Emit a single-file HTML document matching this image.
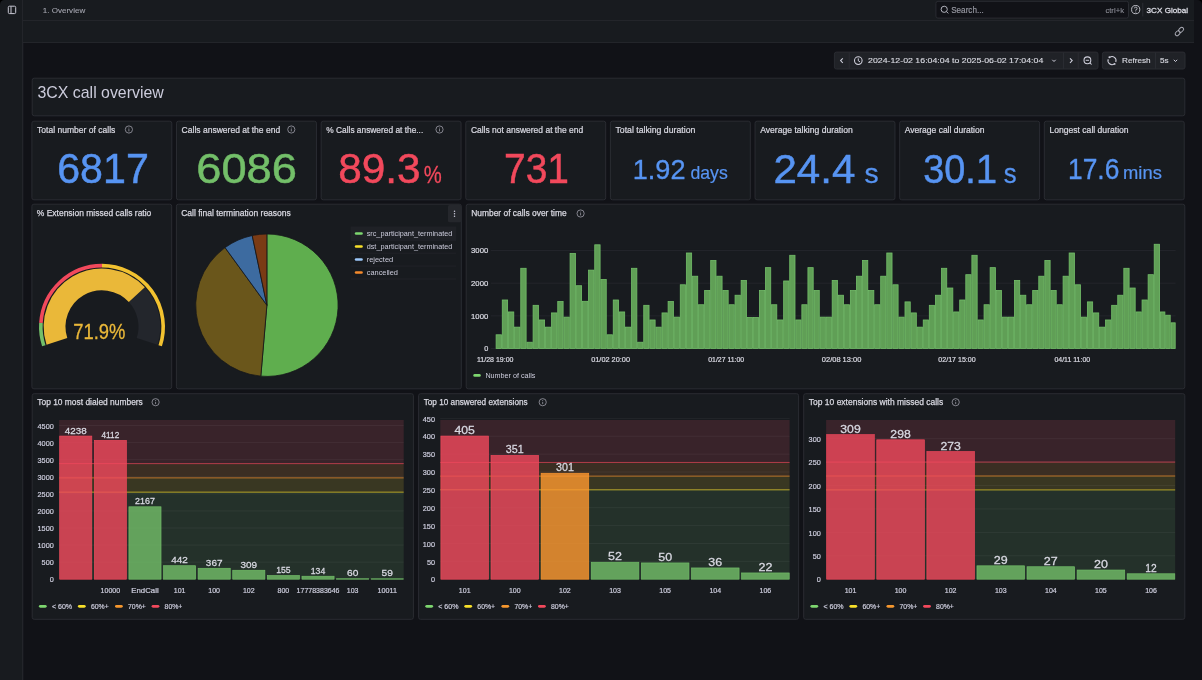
<!DOCTYPE html>
<html><head><meta charset="utf-8"><title>3CX call overview</title>
<style>html,body{margin:0;padding:0;background:#111217;width:1202px;height:680px;overflow:hidden}
svg{display:block;font-family:"Liberation Sans", sans-serif;will-change:transform}</style></head>
<body><svg width="1202" height="680" viewBox="0 0 1202 680">
<rect x="0" y="0" width="1202" height="680" fill="#111217"/>
<rect x="0" y="0" width="23" height="680" fill="#181b1f"/>
<line x1="22.7" y1="0" x2="22.7" y2="680" stroke="#25272c" stroke-width="1.2"/>
<rect x="23" y="0" width="1171" height="43" fill="#181b1f"/>
<line x1="23" y1="20.5" x2="1194" y2="20.5" stroke="#23252a" stroke-width="1"/>
<line x1="23" y1="42.5" x2="1194" y2="42.5" stroke="#23252a" stroke-width="1"/>
<rect x="8.3" y="6.2" width="7.4" height="7.4" rx="1.2" fill="none" stroke="#c9c9d4" stroke-width="1"/>
<line x1="11" y1="6.5" x2="11" y2="13.3" stroke="#c9c9d4" stroke-width="1"/>
<path d="M0,0 H4.5 A4.5,4.5 0 0 0 0,4.5 Z" fill="#000"/>
<path d="M1202,0 H1197.5 A4.5,4.5 0 0 1 1202,4.5 Z" fill="#000"/>
<text x="42.8" y="12.5" font-size="7.9" fill="#a3a4ae" text-anchor="start" font-weight="400" stroke="#a3a4ae" stroke-width="0.1" textLength="42.4" lengthAdjust="spacingAndGlyphs">1. Overview</text>
<rect x="935.9" y="1.3" width="192.6" height="16.8" fill="#111217" stroke="#2a2c32" stroke-width="1" rx="2"/>
<circle cx="944.2" cy="9.3" r="3.1" fill="none" stroke="#b0b1bb" stroke-width="1"/><line x1="946.5" y1="11.6" x2="948.3" y2="13.4" stroke="#b0b1bb" stroke-width="1"/>
<text x="951.2" y="12.9" font-size="8.3" fill="#9a9ba5" text-anchor="start" font-weight="400" stroke="#9a9ba5" stroke-width="0.15" textLength="32.5" lengthAdjust="spacingAndGlyphs">Search...</text>
<text x="1124" y="12.6" font-size="6.9" fill="#8b8c96" text-anchor="end" font-weight="400" stroke="#8b8c96" stroke-width="0.1" textLength="18.6" lengthAdjust="spacingAndGlyphs">ctrl+k</text>
<circle cx="1135.7" cy="9.6" r="4.1" fill="none" stroke="#c4c5ce" stroke-width="0.95"/>
<path d="M1134.4,8.4 A1.35,1.35 0 1 1 1135.8,9.8 L1135.8,10.7" fill="none" stroke="#c4c5ce" stroke-width="0.85"/><circle cx="1135.8" cy="12" r="0.5" fill="#c4c5ce"/>
<line x1="1142.8" y1="2.8" x2="1142.8" y2="16.4" stroke="#2c2e34" stroke-width="1"/>
<text x="1146.6" y="12.7" font-size="8.0" fill="#d8d9e1" text-anchor="start" font-weight="400" stroke="#d8d9e1" stroke-width="0.3" textLength="41.5" lengthAdjust="spacingAndGlyphs">3CX Global</text>
<g transform="translate(1179.4,31.5) rotate(-45)" fill="none" stroke="#aeafb9" stroke-width="0.95"><rect x="-5.2" y="-1.9" width="5.6" height="3.8" rx="1.9"/><rect x="-0.4" y="-1.9" width="5.6" height="3.8" rx="1.9"/></g>
<rect x="834.4" y="52.1" width="263.6" height="16.9" fill="#202227" stroke="#2a2c32" stroke-width="1" rx="2"/>
<line x1="849.2" y1="52.4" x2="849.2" y2="68.8" stroke="#2a2c32" stroke-width="1"/>
<line x1="1063.5" y1="52.4" x2="1063.5" y2="68.8" stroke="#2a2c32" stroke-width="1"/>
<line x1="1078.2" y1="52.4" x2="1078.2" y2="68.8" stroke="#2a2c32" stroke-width="1"/>
<polyline points="842.8,58.4 840.6,60.6 842.8,62.8" fill="none" stroke="#d0d0dc" stroke-width="1.05"/>
<circle cx="858.3" cy="60.6" r="3.8" fill="none" stroke="#d0d0dc" stroke-width="1.05"/><polyline points="858.3,58.4 858.3,60.8 860,61.9" fill="none" stroke="#d0d0dc" stroke-width="1"/>
<text x="868" y="63.1" font-size="8.0" fill="#d8d9e1" text-anchor="start" font-weight="400" stroke="#d8d9e1" stroke-width="0.15" textLength="175.3" lengthAdjust="spacingAndGlyphs">2024-12-02 16:04:04 to 2025-06-02 17:04:04</text>
<polyline points="1052.3,59.8 1054,61.5 1055.7,59.8" fill="none" stroke="#d0d0dc" stroke-width="1"/>
<polyline points="1070,58.4 1072.2,60.6 1070,62.8" fill="none" stroke="#d0d0dc" stroke-width="1.05"/>
<circle cx="1087.4" cy="60.3" r="3.4" fill="none" stroke="#d0d0dc" stroke-width="1.05"/><line x1="1085.7" y1="60.3" x2="1089.1" y2="60.3" stroke="#d0d0dc" stroke-width="0.95"/><line x1="1089.9" y1="62.8" x2="1091.6" y2="64.5" stroke="#d0d0dc" stroke-width="1.05"/>
<rect x="1102.4" y="52.1" width="82.6" height="16.9" fill="#202227" stroke="#2a2c32" stroke-width="1" rx="2"/>
<line x1="1155.5" y1="52.4" x2="1155.5" y2="68.8" stroke="#2a2c32" stroke-width="1"/>
<path d="M1109.71,57.32 A4.0,4.0 0 0 1 1115.76,61.97 M1114.29,63.88 A4.0,4.0 0 0 1 1108.24,59.23" fill="none" stroke="#d0d0dc" stroke-width="1.05"/><circle cx="1109.41" cy="57.32" r="0.95" fill="#d0d0dc"/><circle cx="1114.59" cy="63.88" r="0.95" fill="#d0d0dc"/>
<text x="1122" y="63.1" font-size="8.0" fill="#d8d9e1" text-anchor="start" font-weight="400" stroke="#d8d9e1" stroke-width="0.15" textLength="28.6" lengthAdjust="spacingAndGlyphs">Refresh</text>
<text x="1160" y="63.1" font-size="8.0" fill="#d8d9e1" text-anchor="start" font-weight="400" stroke="#d8d9e1" stroke-width="0.15" textLength="8.6" lengthAdjust="spacingAndGlyphs">5s</text>
<polyline points="1173.8,59.8 1175.5,61.5 1177.2,59.8" fill="none" stroke="#d0d0dc" stroke-width="1"/>
<rect x="32.2" y="78.2" width="1152.6" height="37.6" fill="#181b1f" stroke="#2a2c32" stroke-width="1" rx="2"/>
<text x="37.5" y="97.5" font-size="15.9" fill="#ccccdc" text-anchor="start" font-weight="400">3CX call overview</text>
<rect x="31.9" y="121.2" width="139.9" height="78.6" fill="#181b1f" stroke="#2a2c32" stroke-width="1" rx="2"/>
<text x="37.0" y="132.7" font-size="8.5" fill="#d9d9e2" text-anchor="start" font-weight="400" stroke="#d9d9e2" stroke-width="0.22" textLength="78.3" lengthAdjust="spacingAndGlyphs">Total number of calls</text>
<rect x="176.52999999999997" y="121.2" width="139.9" height="78.6" fill="#181b1f" stroke="#2a2c32" stroke-width="1" rx="2"/>
<text x="181.63" y="132.7" font-size="8.5" fill="#d9d9e2" text-anchor="start" font-weight="400" stroke="#d9d9e2" stroke-width="0.22" textLength="98.5" lengthAdjust="spacingAndGlyphs">Calls answered at the end</text>
<rect x="321.15999999999997" y="121.2" width="139.9" height="78.6" fill="#181b1f" stroke="#2a2c32" stroke-width="1" rx="2"/>
<text x="326.26" y="132.7" font-size="8.5" fill="#d9d9e2" text-anchor="start" font-weight="400" stroke="#d9d9e2" stroke-width="0.22" textLength="97" lengthAdjust="spacingAndGlyphs">% Calls answered at the...</text>
<rect x="465.78999999999996" y="121.2" width="139.9" height="78.6" fill="#181b1f" stroke="#2a2c32" stroke-width="1" rx="2"/>
<text x="470.89" y="132.7" font-size="8.5" fill="#d9d9e2" text-anchor="start" font-weight="400" stroke="#d9d9e2" stroke-width="0.22" textLength="112.3" lengthAdjust="spacingAndGlyphs">Calls not answered at the end</text>
<rect x="610.4200000000001" y="121.2" width="139.89999999999995" height="78.6" fill="#181b1f" stroke="#2a2c32" stroke-width="1" rx="2"/>
<text x="615.52" y="132.7" font-size="8.5" fill="#d9d9e2" text-anchor="start" font-weight="400" stroke="#d9d9e2" stroke-width="0.22" textLength="79.8" lengthAdjust="spacingAndGlyphs">Total talking duration</text>
<rect x="755.0500000000001" y="121.2" width="139.90000000000006" height="78.6" fill="#181b1f" stroke="#2a2c32" stroke-width="1" rx="2"/>
<text x="760.15" y="132.7" font-size="8.5" fill="#d9d9e2" text-anchor="start" font-weight="400" stroke="#d9d9e2" stroke-width="0.22" textLength="92.6" lengthAdjust="spacingAndGlyphs">Average talking duration</text>
<rect x="899.6800000000001" y="121.2" width="139.89999999999995" height="78.6" fill="#181b1f" stroke="#2a2c32" stroke-width="1" rx="2"/>
<text x="904.78" y="132.7" font-size="8.5" fill="#d9d9e2" text-anchor="start" font-weight="400" stroke="#d9d9e2" stroke-width="0.22" textLength="79.7" lengthAdjust="spacingAndGlyphs">Average call duration</text>
<rect x="1044.31" y="121.2" width="139.89999999999995" height="78.6" fill="#181b1f" stroke="#2a2c32" stroke-width="1" rx="2"/>
<text x="1049.4099999999999" y="132.7" font-size="8.5" fill="#d9d9e2" text-anchor="start" font-weight="400" stroke="#d9d9e2" stroke-width="0.22" textLength="79.2" lengthAdjust="spacingAndGlyphs">Longest call duration</text>
<text x="57.20" y="183.2" font-size="42.9" fill="#5794F2" textLength="91.60" lengthAdjust="spacingAndGlyphs" stroke="#5794F2" stroke-width="0.51">6817</text>
<text x="196.20" y="183.2" font-size="42.9" fill="#73BF69" textLength="100.80" lengthAdjust="spacingAndGlyphs" stroke="#73BF69" stroke-width="0.51">6086</text>
<text x="338.20" y="183.2" font-size="42.9" fill="#F2495C" textLength="82.40" lengthAdjust="spacingAndGlyphs" stroke="#F2495C" stroke-width="0.51">89.3</text>
<text x="423.66" y="183.2" font-size="24" fill="#F2495C" textLength="17.98" lengthAdjust="spacingAndGlyphs" stroke="#F2495C" stroke-width="0.29">%</text>
<text x="504.10" y="183.2" font-size="42.9" fill="#F2495C" textLength="64.90" lengthAdjust="spacingAndGlyphs" stroke="#F2495C" stroke-width="0.51">731</text>
<text x="632.70" y="178.6" font-size="28.5" fill="#5794F2" textLength="52.79" lengthAdjust="spacingAndGlyphs" stroke="#5794F2" stroke-width="0.34">1.92</text>
<text x="690.38" y="178.6" font-size="17.8" fill="#5794F2" textLength="37.35" lengthAdjust="spacingAndGlyphs" stroke="#5794F2" stroke-width="0.21">days</text>
<text x="773.47" y="182.7" font-size="40.8" fill="#5794F2" textLength="81.86" lengthAdjust="spacingAndGlyphs" stroke="#5794F2" stroke-width="0.49">24.4</text>
<text x="864.50" y="182.7" font-size="28.5" fill="#5794F2" textLength="14.10" lengthAdjust="spacingAndGlyphs" stroke="#5794F2" stroke-width="0.34">s</text>
<text x="923.27" y="182.7" font-size="40.8" fill="#5794F2" textLength="73.66" lengthAdjust="spacingAndGlyphs" stroke="#5794F2" stroke-width="0.49">30.1</text>
<text x="1003.80" y="182.7" font-size="28.5" fill="#5794F2" textLength="12.80" lengthAdjust="spacingAndGlyphs" stroke="#5794F2" stroke-width="0.34">s</text>
<text x="1067.98" y="178.5" font-size="29.2" fill="#5794F2" textLength="51.34" lengthAdjust="spacingAndGlyphs" stroke="#5794F2" stroke-width="0.35">17.6</text>
<text x="1123.04" y="178.5" font-size="18.8" fill="#5794F2" textLength="38.82" lengthAdjust="spacingAndGlyphs" stroke="#5794F2" stroke-width="0.23">mins</text>
<circle cx="128.9" cy="129.5" r="3.6" fill="none" stroke="#8e8e99" stroke-width="0.9"/>
<line x1="128.9" y1="129.1" x2="128.9" y2="131.4" stroke="#8e8e99" stroke-width="0.9"/>
<circle cx="128.9" cy="127.9" r="0.5" fill="#8e8e99"/>
<circle cx="291.3" cy="129.5" r="3.6" fill="none" stroke="#8e8e99" stroke-width="0.9"/>
<line x1="291.3" y1="129.1" x2="291.3" y2="131.4" stroke="#8e8e99" stroke-width="0.9"/>
<circle cx="291.3" cy="127.9" r="0.5" fill="#8e8e99"/>
<circle cx="439.5" cy="129.5" r="3.6" fill="none" stroke="#8e8e99" stroke-width="0.9"/>
<line x1="439.5" y1="129.1" x2="439.5" y2="131.4" stroke="#8e8e99" stroke-width="0.9"/>
<circle cx="439.5" cy="127.9" r="0.5" fill="#8e8e99"/>
<rect x="31.9" y="204.2" width="139.8" height="184.6" fill="#181b1f" stroke="#2a2c32" stroke-width="1" rx="2"/>
<text x="36.8" y="216.0" font-size="8.5" fill="#d9d9e2" text-anchor="start" font-weight="400" stroke="#d9d9e2" stroke-width="0.25" textLength="114.5" lengthAdjust="spacingAndGlyphs">% Extension missed calls ratio</text>
<path d="M43.80,345.71 A61.2,61.2 0 0 1 40.92,322.96" fill="none" stroke="#73BF69" stroke-width="3.6"/>
<path d="M40.92,322.96 A61.2,61.2 0 0 1 102.00,265.60" fill="none" stroke="#F2495C" stroke-width="3.6"/>
<path d="M102.00,265.60 A61.2,61.2 0 0 1 160.20,345.71" fill="none" stroke="#F2C230" stroke-width="3.6"/>
<path d="M136.83,294.66 A47.4,47.4 0 0 1 147.08,341.45" fill="none" stroke="#23262c" stroke-width="21.8"/>
<path d="M56.92,341.45 A47.4,47.4 0 0 1 136.83,294.66" fill="none" stroke="#EAB839" stroke-width="21.8"/>
<text x="73.2" y="339.0" font-size="21.6" fill="#EAB839" stroke="#EAB839" stroke-width="0.3" textLength="52.2" lengthAdjust="spacingAndGlyphs">71.9%</text>
<rect x="176.39999999999998" y="204.2" width="284.90000000000003" height="184.6" fill="#181b1f" stroke="#2a2c32" stroke-width="1" rx="2"/>
<text x="181.2" y="216.0" font-size="8.5" fill="#d9d9e2" text-anchor="start" font-weight="400" stroke="#d9d9e2" stroke-width="0.25" textLength="109.6" lengthAdjust="spacingAndGlyphs">Call final termination reasons</text>
<rect x="448" y="205" width="13.3" height="17.3" fill="#25272c" rx="1.5"/>
<circle cx="454.5" cy="211.2" r="0.75" fill="#ccccdc"/>
<circle cx="454.5" cy="213.7" r="0.75" fill="#ccccdc"/>
<circle cx="454.5" cy="216.2" r="0.75" fill="#ccccdc"/>
<path d="M266.9,305.2 L266.90,234.00 A71.2,71.2 0 1 1 260.82,376.14 Z" fill="#5FAE4E" stroke="#15171b" stroke-width="0.8"/>
<path d="M266.9,305.2 L260.82,376.14 A71.2,71.2 0 0 1 225.05,247.60 Z" fill="#6A561B" stroke="#15171b" stroke-width="0.8"/>
<path d="M266.9,305.2 L225.05,247.60 A71.2,71.2 0 0 1 252.22,235.53 Z" fill="#3D6BA0" stroke="#15171b" stroke-width="0.8"/>
<path d="M266.9,305.2 L252.22,235.53 A71.2,71.2 0 0 1 266.90,234.00 Z" fill="#7A3B15" stroke="#15171b" stroke-width="0.8"/>
<rect x="350.6" y="226.5" width="105.7" height="13.8" fill="#1f2126"/>
<line x1="351" y1="240.3" x2="456" y2="240.3" stroke="#202228" stroke-width="1"/>
<rect x="354.8" y="232.2" width="8" height="2.6" rx="1.3" fill="#7DD66F"/>
<text x="366.7" y="236.4" font-size="7.6" fill="#ccccdc" textLength="85.6" lengthAdjust="spacingAndGlyphs">src_participant_terminated</text>
<line x1="351" y1="253.2" x2="456" y2="253.2" stroke="#202228" stroke-width="1"/>
<rect x="354.8" y="245.2" width="8" height="2.6" rx="1.3" fill="#F7E02A"/>
<text x="366.7" y="249.4" font-size="7.6" fill="#ccccdc" textLength="85.6" lengthAdjust="spacingAndGlyphs">dst_participant_terminated</text>
<line x1="351" y1="266.1" x2="456" y2="266.1" stroke="#202228" stroke-width="1"/>
<rect x="354.8" y="258.2" width="8" height="2.6" rx="1.3" fill="#9CC8FA"/>
<text x="366.7" y="262.4" font-size="7.6" fill="#ccccdc" textLength="26.5" lengthAdjust="spacingAndGlyphs">rejected</text>
<line x1="351" y1="279.0" x2="456" y2="279.0" stroke="#202228" stroke-width="1"/>
<rect x="354.8" y="271.2" width="8" height="2.6" rx="1.3" fill="#F58A2C"/>
<text x="366.7" y="275.4" font-size="7.6" fill="#ccccdc" textLength="31.3" lengthAdjust="spacingAndGlyphs">cancelled</text>
<rect x="466.2" y="204.2" width="718.6" height="184.6" fill="#181b1f" stroke="#2a2c32" stroke-width="1" rx="2"/>
<text x="471.2" y="216.0" font-size="8.5" fill="#d9d9e2" text-anchor="start" font-weight="400" stroke="#d9d9e2" stroke-width="0.25" textLength="95.5" lengthAdjust="spacingAndGlyphs">Number of calls over time</text>
<circle cx="580.6" cy="213.5" r="3.6" fill="none" stroke="#8e8e99" stroke-width="0.9"/>
<line x1="580.6" y1="213.1" x2="580.6" y2="215.4" stroke="#8e8e99" stroke-width="0.9"/>
<circle cx="580.6" cy="211.9" r="0.5" fill="#8e8e99"/>
<line x1="490.8" y1="348.50" x2="1175.6" y2="348.50" stroke="#23252b" stroke-width="1"/>
<text x="488.2" y="351.2" font-size="7.3" fill="#d9d9e2" text-anchor="end" font-weight="400" stroke="#d9d9e2" stroke-width="0.22">0</text>
<line x1="490.8" y1="315.83" x2="1175.6" y2="315.83" stroke="#23252b" stroke-width="1"/>
<text x="488.2" y="318.53" font-size="7.3" fill="#d9d9e2" text-anchor="end" font-weight="400" stroke="#d9d9e2" stroke-width="0.22" textLength="17.1" lengthAdjust="spacingAndGlyphs">1000</text>
<line x1="490.8" y1="283.16" x2="1175.6" y2="283.16" stroke="#23252b" stroke-width="1"/>
<text x="488.2" y="285.85999999999996" font-size="7.3" fill="#d9d9e2" text-anchor="end" font-weight="400" stroke="#d9d9e2" stroke-width="0.22" textLength="17.1" lengthAdjust="spacingAndGlyphs">2000</text>
<line x1="490.8" y1="250.49" x2="1175.6" y2="250.49" stroke="#23252b" stroke-width="1"/>
<text x="488.2" y="253.18999999999997" font-size="7.3" fill="#d9d9e2" text-anchor="end" font-weight="400" stroke="#d9d9e2" stroke-width="0.22" textLength="17.1" lengthAdjust="spacingAndGlyphs">3000</text>
<rect x="496.10" y="334.79" width="5.37" height="13.71" fill="#609F56" stroke="#73BF69" stroke-width="0.8"/>
<rect x="502.26" y="299.99" width="5.36" height="48.51" fill="#609F56" stroke="#73BF69" stroke-width="0.8"/>
<rect x="508.43" y="311.95" width="5.36" height="36.55" fill="#609F56" stroke="#73BF69" stroke-width="0.8"/>
<rect x="514.59" y="327.15" width="5.37" height="21.35" fill="#609F56" stroke="#73BF69" stroke-width="0.8"/>
<rect x="520.76" y="268.29" width="5.36" height="80.21" fill="#609F56" stroke="#73BF69" stroke-width="0.8"/>
<rect x="526.92" y="342.23" width="5.36" height="6.27" fill="#609F56" stroke="#73BF69" stroke-width="0.8"/>
<rect x="533.09" y="305.32" width="5.37" height="43.18" fill="#609F56" stroke="#73BF69" stroke-width="0.8"/>
<rect x="539.25" y="319.97" width="5.36" height="28.53" fill="#609F56" stroke="#73BF69" stroke-width="0.8"/>
<rect x="545.42" y="327.15" width="5.36" height="21.35" fill="#609F56" stroke="#73BF69" stroke-width="0.8"/>
<rect x="551.58" y="312.92" width="5.37" height="35.58" fill="#609F56" stroke="#73BF69" stroke-width="0.8"/>
<rect x="557.75" y="301.51" width="5.36" height="46.99" fill="#609F56" stroke="#73BF69" stroke-width="0.8"/>
<rect x="563.91" y="317.13" width="5.36" height="31.37" fill="#609F56" stroke="#73BF69" stroke-width="0.8"/>
<rect x="570.08" y="253.38" width="5.37" height="95.12" fill="#609F56" stroke="#73BF69" stroke-width="0.8"/>
<rect x="576.25" y="285.72" width="5.36" height="62.78" fill="#609F56" stroke="#73BF69" stroke-width="0.8"/>
<rect x="582.41" y="301.31" width="5.36" height="47.19" fill="#609F56" stroke="#73BF69" stroke-width="0.8"/>
<rect x="588.57" y="270.13" width="5.37" height="78.37" fill="#609F56" stroke="#73BF69" stroke-width="0.8"/>
<rect x="594.74" y="244.81" width="5.36" height="103.69" fill="#609F56" stroke="#73BF69" stroke-width="0.8"/>
<rect x="600.90" y="279.45" width="5.36" height="69.05" fill="#609F56" stroke="#73BF69" stroke-width="0.8"/>
<rect x="607.07" y="334.79" width="5.37" height="13.71" fill="#609F56" stroke="#73BF69" stroke-width="0.8"/>
<rect x="613.24" y="299.99" width="5.36" height="48.51" fill="#609F56" stroke="#73BF69" stroke-width="0.8"/>
<rect x="619.40" y="311.95" width="5.29" height="36.55" fill="#609F56" stroke="#73BF69" stroke-width="0.8"/>
<rect x="625.49" y="327.15" width="5.29" height="21.35" fill="#609F56" stroke="#73BF69" stroke-width="0.8"/>
<rect x="631.57" y="268.29" width="5.29" height="80.21" fill="#609F56" stroke="#73BF69" stroke-width="0.8"/>
<rect x="637.66" y="342.23" width="5.29" height="6.27" fill="#609F56" stroke="#73BF69" stroke-width="0.8"/>
<rect x="643.75" y="305.32" width="5.29" height="43.18" fill="#609F56" stroke="#73BF69" stroke-width="0.8"/>
<rect x="649.83" y="319.97" width="5.29" height="28.53" fill="#609F56" stroke="#73BF69" stroke-width="0.8"/>
<rect x="655.92" y="327.15" width="5.29" height="21.35" fill="#609F56" stroke="#73BF69" stroke-width="0.8"/>
<rect x="662.01" y="312.92" width="5.29" height="35.58" fill="#609F56" stroke="#73BF69" stroke-width="0.8"/>
<rect x="668.10" y="301.51" width="5.29" height="46.99" fill="#609F56" stroke="#73BF69" stroke-width="0.8"/>
<rect x="674.18" y="317.13" width="5.29" height="31.37" fill="#609F56" stroke="#73BF69" stroke-width="0.8"/>
<rect x="680.27" y="284.78" width="5.29" height="63.72" fill="#609F56" stroke="#73BF69" stroke-width="0.8"/>
<rect x="686.36" y="252.99" width="5.29" height="95.51" fill="#609F56" stroke="#73BF69" stroke-width="0.8"/>
<rect x="692.44" y="276.21" width="5.29" height="72.29" fill="#609F56" stroke="#73BF69" stroke-width="0.8"/>
<rect x="698.53" y="304.74" width="5.29" height="43.76" fill="#609F56" stroke="#73BF69" stroke-width="0.8"/>
<rect x="704.62" y="290.48" width="5.29" height="58.02" fill="#609F56" stroke="#73BF69" stroke-width="0.8"/>
<rect x="710.70" y="260.43" width="5.29" height="88.07" fill="#609F56" stroke="#73BF69" stroke-width="0.8"/>
<rect x="716.79" y="276.21" width="5.29" height="72.29" fill="#609F56" stroke="#73BF69" stroke-width="0.8"/>
<rect x="722.88" y="290.48" width="5.29" height="58.02" fill="#609F56" stroke="#73BF69" stroke-width="0.8"/>
<rect x="728.97" y="304.74" width="5.29" height="43.76" fill="#609F56" stroke="#73BF69" stroke-width="0.8"/>
<rect x="735.05" y="295.23" width="5.29" height="53.27" fill="#609F56" stroke="#73BF69" stroke-width="0.8"/>
<rect x="741.14" y="280.39" width="5.29" height="68.11" fill="#609F56" stroke="#73BF69" stroke-width="0.8"/>
<rect x="747.23" y="317.45" width="5.29" height="31.05" fill="#609F56" stroke="#73BF69" stroke-width="0.8"/>
<rect x="753.31" y="317.45" width="5.29" height="31.05" fill="#609F56" stroke="#73BF69" stroke-width="0.8"/>
<rect x="759.40" y="290.48" width="5.27" height="58.02" fill="#609F56" stroke="#73BF69" stroke-width="0.8"/>
<rect x="765.47" y="267.64" width="5.27" height="80.86" fill="#609F56" stroke="#73BF69" stroke-width="0.8"/>
<rect x="771.53" y="304.74" width="5.27" height="43.76" fill="#609F56" stroke="#73BF69" stroke-width="0.8"/>
<rect x="777.60" y="319.97" width="5.27" height="28.53" fill="#609F56" stroke="#73BF69" stroke-width="0.8"/>
<rect x="783.66" y="280.97" width="5.27" height="67.53" fill="#609F56" stroke="#73BF69" stroke-width="0.8"/>
<rect x="789.73" y="255.29" width="5.27" height="93.21" fill="#609F56" stroke="#73BF69" stroke-width="0.8"/>
<rect x="795.79" y="319.97" width="5.27" height="28.53" fill="#609F56" stroke="#73BF69" stroke-width="0.8"/>
<rect x="801.86" y="304.74" width="5.27" height="43.76" fill="#609F56" stroke="#73BF69" stroke-width="0.8"/>
<rect x="807.92" y="267.64" width="5.27" height="80.86" fill="#609F56" stroke="#73BF69" stroke-width="0.8"/>
<rect x="813.99" y="290.48" width="5.27" height="58.02" fill="#609F56" stroke="#73BF69" stroke-width="0.8"/>
<rect x="820.05" y="317.13" width="5.27" height="31.37" fill="#609F56" stroke="#73BF69" stroke-width="0.8"/>
<rect x="826.12" y="317.13" width="5.27" height="31.37" fill="#609F56" stroke="#73BF69" stroke-width="0.8"/>
<rect x="832.18" y="280.39" width="5.27" height="68.11" fill="#609F56" stroke="#73BF69" stroke-width="0.8"/>
<rect x="838.25" y="295.23" width="5.27" height="53.27" fill="#609F56" stroke="#73BF69" stroke-width="0.8"/>
<rect x="844.31" y="304.74" width="5.27" height="43.76" fill="#609F56" stroke="#73BF69" stroke-width="0.8"/>
<rect x="850.38" y="290.48" width="5.27" height="58.02" fill="#609F56" stroke="#73BF69" stroke-width="0.8"/>
<rect x="856.44" y="276.21" width="5.27" height="72.29" fill="#609F56" stroke="#73BF69" stroke-width="0.8"/>
<rect x="862.51" y="260.43" width="5.27" height="88.07" fill="#609F56" stroke="#73BF69" stroke-width="0.8"/>
<rect x="868.57" y="290.48" width="5.27" height="58.02" fill="#609F56" stroke="#73BF69" stroke-width="0.8"/>
<rect x="874.64" y="304.74" width="5.27" height="43.76" fill="#609F56" stroke="#73BF69" stroke-width="0.8"/>
<rect x="880.70" y="276.21" width="5.27" height="72.29" fill="#609F56" stroke="#73BF69" stroke-width="0.8"/>
<rect x="886.77" y="252.99" width="5.27" height="95.51" fill="#609F56" stroke="#73BF69" stroke-width="0.8"/>
<rect x="892.83" y="284.78" width="5.27" height="63.72" fill="#609F56" stroke="#73BF69" stroke-width="0.8"/>
<rect x="898.90" y="317.13" width="5.28" height="31.37" fill="#609F56" stroke="#73BF69" stroke-width="0.8"/>
<rect x="904.98" y="301.89" width="5.28" height="46.61" fill="#609F56" stroke="#73BF69" stroke-width="0.8"/>
<rect x="911.06" y="312.92" width="5.28" height="35.58" fill="#609F56" stroke="#73BF69" stroke-width="0.8"/>
<rect x="917.15" y="327.15" width="5.28" height="21.35" fill="#609F56" stroke="#73BF69" stroke-width="0.8"/>
<rect x="923.23" y="319.97" width="5.28" height="28.53" fill="#609F56" stroke="#73BF69" stroke-width="0.8"/>
<rect x="929.31" y="305.32" width="5.28" height="43.18" fill="#609F56" stroke="#73BF69" stroke-width="0.8"/>
<rect x="935.39" y="295.23" width="5.28" height="53.27" fill="#609F56" stroke="#73BF69" stroke-width="0.8"/>
<rect x="941.47" y="268.29" width="5.28" height="80.21" fill="#609F56" stroke="#73BF69" stroke-width="0.8"/>
<rect x="947.55" y="288.02" width="5.28" height="60.48" fill="#609F56" stroke="#73BF69" stroke-width="0.8"/>
<rect x="953.64" y="311.95" width="5.28" height="36.55" fill="#609F56" stroke="#73BF69" stroke-width="0.8"/>
<rect x="959.72" y="299.99" width="5.28" height="48.51" fill="#609F56" stroke="#73BF69" stroke-width="0.8"/>
<rect x="965.80" y="274.69" width="5.28" height="73.81" fill="#609F56" stroke="#73BF69" stroke-width="0.8"/>
<rect x="971.88" y="255.29" width="5.28" height="93.21" fill="#609F56" stroke="#73BF69" stroke-width="0.8"/>
<rect x="977.96" y="319.97" width="5.28" height="28.53" fill="#609F56" stroke="#73BF69" stroke-width="0.8"/>
<rect x="984.05" y="304.74" width="5.28" height="43.76" fill="#609F56" stroke="#73BF69" stroke-width="0.8"/>
<rect x="990.13" y="267.64" width="5.28" height="80.86" fill="#609F56" stroke="#73BF69" stroke-width="0.8"/>
<rect x="996.21" y="290.48" width="5.28" height="58.02" fill="#609F56" stroke="#73BF69" stroke-width="0.8"/>
<rect x="1002.29" y="317.13" width="5.28" height="31.37" fill="#609F56" stroke="#73BF69" stroke-width="0.8"/>
<rect x="1008.37" y="317.13" width="5.28" height="31.37" fill="#609F56" stroke="#73BF69" stroke-width="0.8"/>
<rect x="1014.45" y="280.39" width="5.28" height="68.11" fill="#609F56" stroke="#73BF69" stroke-width="0.8"/>
<rect x="1020.54" y="295.23" width="5.28" height="53.27" fill="#609F56" stroke="#73BF69" stroke-width="0.8"/>
<rect x="1026.62" y="304.74" width="5.28" height="43.76" fill="#609F56" stroke="#73BF69" stroke-width="0.8"/>
<rect x="1032.70" y="290.48" width="5.28" height="58.02" fill="#609F56" stroke="#73BF69" stroke-width="0.8"/>
<rect x="1038.78" y="276.21" width="5.28" height="72.29" fill="#609F56" stroke="#73BF69" stroke-width="0.8"/>
<rect x="1044.85" y="260.43" width="5.27" height="88.07" fill="#609F56" stroke="#73BF69" stroke-width="0.8"/>
<rect x="1050.92" y="290.48" width="5.28" height="58.02" fill="#609F56" stroke="#73BF69" stroke-width="0.8"/>
<rect x="1057.00" y="304.74" width="5.28" height="43.76" fill="#609F56" stroke="#73BF69" stroke-width="0.8"/>
<rect x="1063.08" y="276.21" width="5.28" height="72.29" fill="#609F56" stroke="#73BF69" stroke-width="0.8"/>
<rect x="1069.15" y="252.99" width="5.28" height="95.51" fill="#609F56" stroke="#73BF69" stroke-width="0.8"/>
<rect x="1075.23" y="284.78" width="5.27" height="63.72" fill="#609F56" stroke="#73BF69" stroke-width="0.8"/>
<rect x="1081.30" y="317.13" width="5.28" height="31.37" fill="#609F56" stroke="#73BF69" stroke-width="0.8"/>
<rect x="1087.38" y="301.89" width="5.28" height="46.61" fill="#609F56" stroke="#73BF69" stroke-width="0.8"/>
<rect x="1093.45" y="312.92" width="5.28" height="35.58" fill="#609F56" stroke="#73BF69" stroke-width="0.8"/>
<rect x="1099.53" y="327.15" width="5.28" height="21.35" fill="#609F56" stroke="#73BF69" stroke-width="0.8"/>
<rect x="1105.60" y="319.97" width="5.27" height="28.53" fill="#609F56" stroke="#73BF69" stroke-width="0.8"/>
<rect x="1111.67" y="305.32" width="5.28" height="43.18" fill="#609F56" stroke="#73BF69" stroke-width="0.8"/>
<rect x="1117.75" y="295.23" width="5.28" height="53.27" fill="#609F56" stroke="#73BF69" stroke-width="0.8"/>
<rect x="1123.83" y="268.29" width="5.28" height="80.21" fill="#609F56" stroke="#73BF69" stroke-width="0.8"/>
<rect x="1129.90" y="288.02" width="5.28" height="60.48" fill="#609F56" stroke="#73BF69" stroke-width="0.8"/>
<rect x="1135.98" y="311.95" width="5.27" height="36.55" fill="#609F56" stroke="#73BF69" stroke-width="0.8"/>
<rect x="1142.05" y="299.99" width="5.28" height="48.51" fill="#609F56" stroke="#73BF69" stroke-width="0.8"/>
<rect x="1148.12" y="274.69" width="5.28" height="73.81" fill="#609F56" stroke="#73BF69" stroke-width="0.8"/>
<rect x="1154.20" y="244.26" width="5.40" height="104.24" fill="#609F56" stroke="#73BF69" stroke-width="0.8"/>
<rect x="1160.40" y="311.95" width="4.50" height="36.55" fill="#609F56" stroke="#73BF69" stroke-width="0.8"/>
<rect x="1165.70" y="315.22" width="4.50" height="33.28" fill="#609F56" stroke="#73BF69" stroke-width="0.8"/>
<rect x="1171.00" y="322.82" width="4.20" height="25.68" fill="#609F56" stroke="#73BF69" stroke-width="0.8"/>
<text x="495.2" y="362.3" font-size="7.2" fill="#d9d9e2" text-anchor="middle" stroke="#d9d9e2" stroke-width="0.22" textLength="36.5" lengthAdjust="spacingAndGlyphs">11/28 19:00</text>
<text x="610.6" y="362.3" font-size="7.2" fill="#d9d9e2" text-anchor="middle" stroke="#d9d9e2" stroke-width="0.22" textLength="38.8" lengthAdjust="spacingAndGlyphs">01/02 20:00</text>
<text x="726.2" y="362.3" font-size="7.2" fill="#d9d9e2" text-anchor="middle" stroke="#d9d9e2" stroke-width="0.22" textLength="36" lengthAdjust="spacingAndGlyphs">01/27 11:00</text>
<text x="841.6" y="362.3" font-size="7.2" fill="#d9d9e2" text-anchor="middle" stroke="#d9d9e2" stroke-width="0.22" textLength="39.5" lengthAdjust="spacingAndGlyphs">02/08 13:00</text>
<text x="957" y="362.3" font-size="7.2" fill="#d9d9e2" text-anchor="middle" stroke="#d9d9e2" stroke-width="0.22" textLength="37.3" lengthAdjust="spacingAndGlyphs">02/17 15:00</text>
<text x="1072.3" y="362.3" font-size="7.2" fill="#d9d9e2" text-anchor="middle" stroke="#d9d9e2" stroke-width="0.22" textLength="35.8" lengthAdjust="spacingAndGlyphs">04/11 11:00</text>
<rect x="473.3" y="374" width="7.5" height="2.8" rx="1.4" fill="#7DD66F"/>
<text x="485.4" y="378.4" font-size="7.3" fill="#ccccdc" textLength="50" lengthAdjust="spacingAndGlyphs">Number of calls</text>
<rect x="32.2" y="393.7" width="381.20000000000005" height="225.6" fill="#181b1f" stroke="#2a2c32" stroke-width="1" rx="2"/>
<text x="37.3" y="405.0" font-size="8.5" fill="#d9d9e2" text-anchor="start" font-weight="400" stroke="#d9d9e2" stroke-width="0.25" textLength="105.5" lengthAdjust="spacingAndGlyphs">Top 10 most dialed numbers</text>
<circle cx="155.6" cy="402.2" r="3.6" fill="none" stroke="#8e8e99" stroke-width="0.9"/>
<line x1="155.6" y1="401.8" x2="155.6" y2="404.09999999999997" stroke="#8e8e99" stroke-width="0.9"/>
<circle cx="155.6" cy="400.59999999999997" r="0.5" fill="#8e8e99"/>
<rect x="59.1" y="420.0" width="344.59999999999997" height="43.61521300785108" fill="#39232a"/>
<rect x="59.1" y="463.6152130078511" width="344.59999999999997" height="14.27124286756191" fill="#3b2e23"/>
<rect x="59.1" y="477.886455875413" width="344.59999999999997" height="14.271242867561853" fill="#393722"/>
<rect x="59.1" y="492.15769874297484" width="344.59999999999997" height="87.04230125702523" fill="#24312a"/>
<text x="53.800000000000004" y="582.40" font-size="7.3" fill="#ccccdc" text-anchor="end" stroke="#ccccdc" stroke-width="0.2">0</text>
<line x1="59.1" y1="562.13" x2="403.7" y2="562.13" stroke="#ffffff" stroke-opacity="0.05" stroke-width="1"/>
<text x="53.800000000000004" y="565.33" font-size="7.3" fill="#ccccdc" text-anchor="end" stroke="#ccccdc" stroke-width="0.2">500</text>
<line x1="59.1" y1="545.05" x2="403.7" y2="545.05" stroke="#ffffff" stroke-opacity="0.05" stroke-width="1"/>
<text x="53.800000000000004" y="548.25" font-size="7.3" fill="#ccccdc" text-anchor="end" stroke="#ccccdc" stroke-width="0.2">1000</text>
<line x1="59.1" y1="527.98" x2="403.7" y2="527.98" stroke="#ffffff" stroke-opacity="0.05" stroke-width="1"/>
<text x="53.800000000000004" y="531.18" font-size="7.3" fill="#ccccdc" text-anchor="end" stroke="#ccccdc" stroke-width="0.2">1500</text>
<line x1="59.1" y1="510.90" x2="403.7" y2="510.90" stroke="#ffffff" stroke-opacity="0.05" stroke-width="1"/>
<text x="53.800000000000004" y="514.10" font-size="7.3" fill="#ccccdc" text-anchor="end" stroke="#ccccdc" stroke-width="0.2">2000</text>
<line x1="59.1" y1="493.83" x2="403.7" y2="493.83" stroke="#ffffff" stroke-opacity="0.05" stroke-width="1"/>
<text x="53.800000000000004" y="497.03" font-size="7.3" fill="#ccccdc" text-anchor="end" stroke="#ccccdc" stroke-width="0.2">2500</text>
<line x1="59.1" y1="476.75" x2="403.7" y2="476.75" stroke="#ffffff" stroke-opacity="0.05" stroke-width="1"/>
<text x="53.800000000000004" y="479.95" font-size="7.3" fill="#ccccdc" text-anchor="end" stroke="#ccccdc" stroke-width="0.2">3000</text>
<line x1="59.1" y1="459.68" x2="403.7" y2="459.68" stroke="#ffffff" stroke-opacity="0.05" stroke-width="1"/>
<text x="53.800000000000004" y="462.88" font-size="7.3" fill="#ccccdc" text-anchor="end" stroke="#ccccdc" stroke-width="0.2">3500</text>
<line x1="59.1" y1="442.60" x2="403.7" y2="442.60" stroke="#ffffff" stroke-opacity="0.05" stroke-width="1"/>
<text x="53.800000000000004" y="445.80" font-size="7.3" fill="#ccccdc" text-anchor="end" stroke="#ccccdc" stroke-width="0.2">4000</text>
<line x1="59.1" y1="425.53" x2="403.7" y2="425.53" stroke="#ffffff" stroke-opacity="0.05" stroke-width="1"/>
<text x="53.800000000000004" y="428.73" font-size="7.3" fill="#ccccdc" text-anchor="end" stroke="#ccccdc" stroke-width="0.2">4500</text>
<line x1="59.1" y1="463.62" x2="403.7" y2="463.62" stroke="#F2495C" stroke-opacity="0.75" stroke-width="0.9"/>
<line x1="59.1" y1="477.89" x2="403.7" y2="477.89" stroke="#FF9830" stroke-opacity="0.75" stroke-width="0.9"/>
<line x1="59.1" y1="492.16" x2="403.7" y2="492.16" stroke="#FADE2A" stroke-opacity="0.75" stroke-width="0.9"/>
<rect x="59.70" y="436.07" width="32.11" height="143.13" fill="#F2495C" fill-opacity="0.8" stroke="#F2495C" stroke-width="0.65"/>
<text x="75.75" y="433.57" font-size="9.79" fill="#d9d9e2" text-anchor="middle" stroke="#d9d9e2" stroke-width="0.28" textLength="21.9" lengthAdjust="spacingAndGlyphs">4238</text>
<rect x="94.31" y="440.38" width="32.11" height="138.82" fill="#F2495C" fill-opacity="0.8" stroke="#F2495C" stroke-width="0.65"/>
<text x="110.37" y="437.88" font-size="9.79" fill="#d9d9e2" text-anchor="middle" stroke="#d9d9e2" stroke-width="0.28" textLength="17.7" lengthAdjust="spacingAndGlyphs">4112</text>
<text x="110.37" y="593.3" font-size="7.0" fill="#ccccdc" text-anchor="middle" stroke="#ccccdc" stroke-width="0.2" textLength="19.5" lengthAdjust="spacingAndGlyphs">10000</text>
<rect x="128.92" y="506.80" width="32.11" height="72.40" fill="#73BF69" fill-opacity="0.8" stroke="#73BF69" stroke-width="0.65"/>
<text x="144.97" y="504.30" font-size="9.79" fill="#d9d9e2" text-anchor="middle" stroke="#d9d9e2" stroke-width="0.28" textLength="19.8" lengthAdjust="spacingAndGlyphs">2167</text>
<text x="144.97" y="593.3" font-size="7.0" fill="#ccccdc" text-anchor="middle" stroke="#ccccdc" stroke-width="0.2" textLength="27.3" lengthAdjust="spacingAndGlyphs">EndCall</text>
<rect x="163.53" y="565.71" width="32.11" height="13.49" fill="#73BF69" fill-opacity="0.8" stroke="#73BF69" stroke-width="0.65"/>
<text x="179.59" y="563.21" font-size="9.79" fill="#d9d9e2" text-anchor="middle" stroke="#d9d9e2" stroke-width="0.28" textLength="16.6" lengthAdjust="spacingAndGlyphs">442</text>
<text x="179.59" y="593.3" font-size="7.0" fill="#ccccdc" text-anchor="middle" stroke="#ccccdc" stroke-width="0.2" textLength="11.7" lengthAdjust="spacingAndGlyphs">101</text>
<rect x="198.14" y="568.27" width="32.11" height="10.93" fill="#73BF69" fill-opacity="0.8" stroke="#73BF69" stroke-width="0.65"/>
<text x="214.19" y="565.77" font-size="9.79" fill="#d9d9e2" text-anchor="middle" stroke="#d9d9e2" stroke-width="0.28" textLength="16.6" lengthAdjust="spacingAndGlyphs">367</text>
<text x="214.19" y="593.3" font-size="7.0" fill="#ccccdc" text-anchor="middle" stroke="#ccccdc" stroke-width="0.2" textLength="11.7" lengthAdjust="spacingAndGlyphs">100</text>
<rect x="232.75" y="570.25" width="32.11" height="8.95" fill="#73BF69" fill-opacity="0.8" stroke="#73BF69" stroke-width="0.65"/>
<text x="248.81" y="567.75" font-size="9.79" fill="#d9d9e2" text-anchor="middle" stroke="#d9d9e2" stroke-width="0.28" textLength="16.6" lengthAdjust="spacingAndGlyphs">309</text>
<text x="248.81" y="593.3" font-size="7.0" fill="#ccccdc" text-anchor="middle" stroke="#ccccdc" stroke-width="0.2" textLength="11.7" lengthAdjust="spacingAndGlyphs">102</text>
<rect x="267.36" y="575.51" width="32.11" height="3.69" fill="#73BF69" fill-opacity="0.8" stroke="#73BF69" stroke-width="0.65"/>
<text x="283.42" y="573.01" font-size="9.79" fill="#d9d9e2" text-anchor="middle" stroke="#d9d9e2" stroke-width="0.28" textLength="14.5" lengthAdjust="spacingAndGlyphs">155</text>
<text x="283.42" y="593.3" font-size="7.0" fill="#ccccdc" text-anchor="middle" stroke="#ccccdc" stroke-width="0.2" textLength="11.7" lengthAdjust="spacingAndGlyphs">800</text>
<rect x="301.97" y="576.22" width="32.11" height="2.98" fill="#73BF69" fill-opacity="0.8" stroke="#73BF69" stroke-width="0.65"/>
<text x="318.03" y="573.72" font-size="9.79" fill="#d9d9e2" text-anchor="middle" stroke="#d9d9e2" stroke-width="0.28" textLength="14.5" lengthAdjust="spacingAndGlyphs">134</text>
<text x="318.03" y="593.3" font-size="7.0" fill="#ccccdc" text-anchor="middle" stroke="#ccccdc" stroke-width="0.2" textLength="42.9" lengthAdjust="spacingAndGlyphs">17778383646</text>
<rect x="336.58" y="578.75" width="32.11" height="0.45" fill="#73BF69" fill-opacity="0.8" stroke="#73BF69" stroke-width="0.65"/>
<text x="352.64" y="576.25" font-size="9.79" fill="#d9d9e2" text-anchor="middle" stroke="#d9d9e2" stroke-width="0.28" textLength="11.3" lengthAdjust="spacingAndGlyphs">60</text>
<text x="352.64" y="593.3" font-size="7.0" fill="#ccccdc" text-anchor="middle" stroke="#ccccdc" stroke-width="0.2" textLength="11.7" lengthAdjust="spacingAndGlyphs">103</text>
<rect x="371.19" y="578.79" width="32.11" height="0.41" fill="#73BF69" fill-opacity="0.8" stroke="#73BF69" stroke-width="0.65"/>
<text x="387.25" y="576.29" font-size="9.79" fill="#d9d9e2" text-anchor="middle" stroke="#d9d9e2" stroke-width="0.28" textLength="11.3" lengthAdjust="spacingAndGlyphs">59</text>
<text x="387.25" y="593.3" font-size="7.0" fill="#ccccdc" text-anchor="middle" stroke="#ccccdc" stroke-width="0.2" textLength="19.5" lengthAdjust="spacingAndGlyphs">10011</text>
<rect x="38.90" y="604.9" width="7.8" height="2.9" rx="1.45" fill="#7DD66F"/>
<text x="51.90" y="609" font-size="7.4" fill="#ccccdc" stroke="#ccccdc" stroke-width="0.2" textLength="20.2" lengthAdjust="spacingAndGlyphs">&lt; 60%</text>
<rect x="77.90" y="604.9" width="7.8" height="2.9" rx="1.45" fill="#F7E02A"/>
<text x="90.90" y="609" font-size="7.4" fill="#ccccdc" stroke="#ccccdc" stroke-width="0.2" textLength="17.8" lengthAdjust="spacingAndGlyphs">60%+</text>
<rect x="115.00" y="604.9" width="7.8" height="2.9" rx="1.45" fill="#F5972E"/>
<text x="128.00" y="609" font-size="7.4" fill="#ccccdc" stroke="#ccccdc" stroke-width="0.2" textLength="17.8" lengthAdjust="spacingAndGlyphs">70%+</text>
<rect x="151.60" y="604.9" width="7.8" height="2.9" rx="1.45" fill="#F2495C"/>
<text x="164.60" y="609" font-size="7.4" fill="#ccccdc" stroke="#ccccdc" stroke-width="0.2" textLength="17.8" lengthAdjust="spacingAndGlyphs">80%+</text>
<rect x="418.59999999999997" y="393.7" width="380.0" height="225.6" fill="#181b1f" stroke="#2a2c32" stroke-width="1" rx="2"/>
<text x="423.7" y="405.0" font-size="8.5" fill="#d9d9e2" text-anchor="start" font-weight="400" stroke="#d9d9e2" stroke-width="0.25" textLength="104" lengthAdjust="spacingAndGlyphs">Top 10 answered extensions</text>
<circle cx="542.7" cy="402.2" r="3.6" fill="none" stroke="#8e8e99" stroke-width="0.9"/>
<line x1="542.7" y1="401.8" x2="542.7" y2="404.09999999999997" stroke="#8e8e99" stroke-width="0.9"/>
<circle cx="542.7" cy="400.59999999999997" r="0.5" fill="#8e8e99"/>
<rect x="440.3" y="420.0" width="349.3" height="42.4458361391695" fill="#39232a"/>
<rect x="440.3" y="462.4458361391695" width="349.3" height="13.686554433221147" fill="#3b2e23"/>
<rect x="440.3" y="476.13239057239065" width="349.3" height="13.68655443322109" fill="#393722"/>
<rect x="440.3" y="489.81894500561174" width="349.3" height="89.38105499438834" fill="#24312a"/>
<text x="435.0" y="582.40" font-size="7.3" fill="#ccccdc" text-anchor="end" stroke="#ccccdc" stroke-width="0.2">0</text>
<line x1="440.3" y1="561.33" x2="789.6" y2="561.33" stroke="#ffffff" stroke-opacity="0.05" stroke-width="1"/>
<text x="435.0" y="564.53" font-size="7.3" fill="#ccccdc" text-anchor="end" stroke="#ccccdc" stroke-width="0.2">50</text>
<line x1="440.3" y1="543.46" x2="789.6" y2="543.46" stroke="#ffffff" stroke-opacity="0.05" stroke-width="1"/>
<text x="435.0" y="546.66" font-size="7.3" fill="#ccccdc" text-anchor="end" stroke="#ccccdc" stroke-width="0.2">100</text>
<line x1="440.3" y1="525.60" x2="789.6" y2="525.60" stroke="#ffffff" stroke-opacity="0.05" stroke-width="1"/>
<text x="435.0" y="528.80" font-size="7.3" fill="#ccccdc" text-anchor="end" stroke="#ccccdc" stroke-width="0.2">150</text>
<line x1="440.3" y1="507.73" x2="789.6" y2="507.73" stroke="#ffffff" stroke-opacity="0.05" stroke-width="1"/>
<text x="435.0" y="510.93" font-size="7.3" fill="#ccccdc" text-anchor="end" stroke="#ccccdc" stroke-width="0.2">200</text>
<line x1="440.3" y1="489.86" x2="789.6" y2="489.86" stroke="#ffffff" stroke-opacity="0.05" stroke-width="1"/>
<text x="435.0" y="493.06" font-size="7.3" fill="#ccccdc" text-anchor="end" stroke="#ccccdc" stroke-width="0.2">250</text>
<line x1="440.3" y1="471.99" x2="789.6" y2="471.99" stroke="#ffffff" stroke-opacity="0.05" stroke-width="1"/>
<text x="435.0" y="475.19" font-size="7.3" fill="#ccccdc" text-anchor="end" stroke="#ccccdc" stroke-width="0.2">300</text>
<line x1="440.3" y1="454.13" x2="789.6" y2="454.13" stroke="#ffffff" stroke-opacity="0.05" stroke-width="1"/>
<text x="435.0" y="457.33" font-size="7.3" fill="#ccccdc" text-anchor="end" stroke="#ccccdc" stroke-width="0.2">350</text>
<line x1="440.3" y1="436.26" x2="789.6" y2="436.26" stroke="#ffffff" stroke-opacity="0.05" stroke-width="1"/>
<text x="435.0" y="439.46" font-size="7.3" fill="#ccccdc" text-anchor="end" stroke="#ccccdc" stroke-width="0.2">400</text>
<line x1="440.3" y1="418.39" x2="789.6" y2="418.39" stroke="#ffffff" stroke-opacity="0.05" stroke-width="1"/>
<text x="435.0" y="421.59" font-size="7.3" fill="#ccccdc" text-anchor="end" stroke="#ccccdc" stroke-width="0.2">450</text>
<line x1="440.3" y1="462.45" x2="789.6" y2="462.45" stroke="#F2495C" stroke-opacity="0.75" stroke-width="0.9"/>
<line x1="440.3" y1="476.13" x2="789.6" y2="476.13" stroke="#FF9830" stroke-opacity="0.75" stroke-width="0.9"/>
<line x1="440.3" y1="489.82" x2="789.6" y2="489.82" stroke="#FADE2A" stroke-opacity="0.75" stroke-width="0.9"/>
<rect x="440.90" y="436.07" width="47.61" height="143.13" fill="#F2495C" fill-opacity="0.8" stroke="#F2495C" stroke-width="0.65"/>
<text x="464.71" y="434.17" font-size="11.80" fill="#d9d9e2" text-anchor="middle" stroke="#d9d9e2" stroke-width="0.28" textLength="20.4" lengthAdjust="spacingAndGlyphs">405</text>
<text x="464.71" y="593.3" font-size="7.0" fill="#ccccdc" text-anchor="middle" stroke="#ccccdc" stroke-width="0.2" textLength="11.7" lengthAdjust="spacingAndGlyphs">101</text>
<rect x="491.01" y="455.37" width="47.61" height="123.83" fill="#F2495C" fill-opacity="0.8" stroke="#F2495C" stroke-width="0.65"/>
<text x="514.82" y="453.47" font-size="11.80" fill="#d9d9e2" text-anchor="middle" stroke="#d9d9e2" stroke-width="0.28" textLength="17.9" lengthAdjust="spacingAndGlyphs">351</text>
<text x="514.82" y="593.3" font-size="7.0" fill="#ccccdc" text-anchor="middle" stroke="#ccccdc" stroke-width="0.2" textLength="11.7" lengthAdjust="spacingAndGlyphs">100</text>
<rect x="541.13" y="473.24" width="47.61" height="105.96" fill="#FF9830" fill-opacity="0.8" stroke="#FF9830" stroke-width="0.65"/>
<text x="564.94" y="471.34" font-size="11.80" fill="#d9d9e2" text-anchor="middle" stroke="#d9d9e2" stroke-width="0.28" textLength="17.9" lengthAdjust="spacingAndGlyphs">301</text>
<text x="564.94" y="593.3" font-size="7.0" fill="#ccccdc" text-anchor="middle" stroke="#ccccdc" stroke-width="0.2" textLength="11.7" lengthAdjust="spacingAndGlyphs">102</text>
<rect x="591.24" y="562.22" width="47.61" height="16.98" fill="#73BF69" fill-opacity="0.8" stroke="#73BF69" stroke-width="0.65"/>
<text x="615.05" y="560.32" font-size="11.80" fill="#d9d9e2" text-anchor="middle" stroke="#d9d9e2" stroke-width="0.28" textLength="13.9" lengthAdjust="spacingAndGlyphs">52</text>
<text x="615.05" y="593.3" font-size="7.0" fill="#ccccdc" text-anchor="middle" stroke="#ccccdc" stroke-width="0.2" textLength="11.7" lengthAdjust="spacingAndGlyphs">103</text>
<rect x="641.36" y="562.93" width="47.61" height="16.27" fill="#73BF69" fill-opacity="0.8" stroke="#73BF69" stroke-width="0.65"/>
<text x="665.16" y="561.03" font-size="11.80" fill="#d9d9e2" text-anchor="middle" stroke="#d9d9e2" stroke-width="0.28" textLength="13.9" lengthAdjust="spacingAndGlyphs">50</text>
<text x="665.16" y="593.3" font-size="7.0" fill="#ccccdc" text-anchor="middle" stroke="#ccccdc" stroke-width="0.2" textLength="11.7" lengthAdjust="spacingAndGlyphs">105</text>
<rect x="691.47" y="567.94" width="47.61" height="11.26" fill="#73BF69" fill-opacity="0.8" stroke="#73BF69" stroke-width="0.65"/>
<text x="715.28" y="566.04" font-size="11.80" fill="#d9d9e2" text-anchor="middle" stroke="#d9d9e2" stroke-width="0.28" textLength="13.9" lengthAdjust="spacingAndGlyphs">36</text>
<text x="715.28" y="593.3" font-size="7.0" fill="#ccccdc" text-anchor="middle" stroke="#ccccdc" stroke-width="0.2" textLength="11.7" lengthAdjust="spacingAndGlyphs">104</text>
<rect x="741.59" y="572.94" width="47.61" height="6.26" fill="#73BF69" fill-opacity="0.8" stroke="#73BF69" stroke-width="0.65"/>
<text x="765.39" y="571.04" font-size="11.80" fill="#d9d9e2" text-anchor="middle" stroke="#d9d9e2" stroke-width="0.28" textLength="13.9" lengthAdjust="spacingAndGlyphs">22</text>
<text x="765.39" y="593.3" font-size="7.0" fill="#ccccdc" text-anchor="middle" stroke="#ccccdc" stroke-width="0.2" textLength="11.7" lengthAdjust="spacingAndGlyphs">106</text>
<rect x="425.30" y="604.9" width="7.8" height="2.9" rx="1.45" fill="#7DD66F"/>
<text x="438.30" y="609" font-size="7.4" fill="#ccccdc" stroke="#ccccdc" stroke-width="0.2" textLength="20.2" lengthAdjust="spacingAndGlyphs">&lt; 60%</text>
<rect x="464.30" y="604.9" width="7.8" height="2.9" rx="1.45" fill="#F7E02A"/>
<text x="477.30" y="609" font-size="7.4" fill="#ccccdc" stroke="#ccccdc" stroke-width="0.2" textLength="17.8" lengthAdjust="spacingAndGlyphs">60%+</text>
<rect x="501.40" y="604.9" width="7.8" height="2.9" rx="1.45" fill="#F5972E"/>
<text x="514.40" y="609" font-size="7.4" fill="#ccccdc" stroke="#ccccdc" stroke-width="0.2" textLength="17.8" lengthAdjust="spacingAndGlyphs">70%+</text>
<rect x="538.00" y="604.9" width="7.8" height="2.9" rx="1.45" fill="#F2495C"/>
<text x="551.00" y="609" font-size="7.4" fill="#ccccdc" stroke="#ccccdc" stroke-width="0.2" textLength="17.8" lengthAdjust="spacingAndGlyphs">80%+</text>
<rect x="803.7" y="393.7" width="381.1" height="225.6" fill="#181b1f" stroke="#2a2c32" stroke-width="1" rx="2"/>
<text x="808.8" y="405.0" font-size="8.5" fill="#d9d9e2" text-anchor="start" font-weight="400" stroke="#d9d9e2" stroke-width="0.25" textLength="134.4" lengthAdjust="spacingAndGlyphs">Top 10 extensions with missed calls</text>
<circle cx="955.7" cy="402.2" r="3.6" fill="none" stroke="#8e8e99" stroke-width="0.9"/>
<line x1="955.7" y1="401.8" x2="955.7" y2="404.09999999999997" stroke="#8e8e99" stroke-width="0.9"/>
<circle cx="955.7" cy="400.59999999999997" r="0.5" fill="#8e8e99"/>
<rect x="826.1" y="420.0" width="349.1" height="42.09408649602824" fill="#39232a"/>
<rect x="826.1" y="462.09408649602824" width="349.1" height="13.91067961165055" fill="#3b2e23"/>
<rect x="826.1" y="476.0047661076788" width="349.1" height="13.910679611650494" fill="#393722"/>
<rect x="826.1" y="489.9154457193293" width="349.1" height="89.28455428067078" fill="#24312a"/>
<text x="820.8000000000001" y="582.40" font-size="7.3" fill="#ccccdc" text-anchor="end" stroke="#ccccdc" stroke-width="0.2">0</text>
<line x1="826.1" y1="555.78" x2="1175.2" y2="555.78" stroke="#ffffff" stroke-opacity="0.05" stroke-width="1"/>
<text x="820.8000000000001" y="558.98" font-size="7.3" fill="#ccccdc" text-anchor="end" stroke="#ccccdc" stroke-width="0.2">50</text>
<line x1="826.1" y1="532.36" x2="1175.2" y2="532.36" stroke="#ffffff" stroke-opacity="0.05" stroke-width="1"/>
<text x="820.8000000000001" y="535.56" font-size="7.3" fill="#ccccdc" text-anchor="end" stroke="#ccccdc" stroke-width="0.2">100</text>
<line x1="826.1" y1="508.94" x2="1175.2" y2="508.94" stroke="#ffffff" stroke-opacity="0.05" stroke-width="1"/>
<text x="820.8000000000001" y="512.14" font-size="7.3" fill="#ccccdc" text-anchor="end" stroke="#ccccdc" stroke-width="0.2">150</text>
<line x1="826.1" y1="485.53" x2="1175.2" y2="485.53" stroke="#ffffff" stroke-opacity="0.05" stroke-width="1"/>
<text x="820.8000000000001" y="488.73" font-size="7.3" fill="#ccccdc" text-anchor="end" stroke="#ccccdc" stroke-width="0.2">200</text>
<line x1="826.1" y1="462.11" x2="1175.2" y2="462.11" stroke="#ffffff" stroke-opacity="0.05" stroke-width="1"/>
<text x="820.8000000000001" y="465.31" font-size="7.3" fill="#ccccdc" text-anchor="end" stroke="#ccccdc" stroke-width="0.2">250</text>
<line x1="826.1" y1="438.69" x2="1175.2" y2="438.69" stroke="#ffffff" stroke-opacity="0.05" stroke-width="1"/>
<text x="820.8000000000001" y="441.89" font-size="7.3" fill="#ccccdc" text-anchor="end" stroke="#ccccdc" stroke-width="0.2">300</text>
<line x1="826.1" y1="462.09" x2="1175.2" y2="462.09" stroke="#F2495C" stroke-opacity="0.75" stroke-width="0.9"/>
<line x1="826.1" y1="476.00" x2="1175.2" y2="476.00" stroke="#FF9830" stroke-opacity="0.75" stroke-width="0.9"/>
<line x1="826.1" y1="489.92" x2="1175.2" y2="489.92" stroke="#FADE2A" stroke-opacity="0.75" stroke-width="0.9"/>
<rect x="826.70" y="434.67" width="47.59" height="144.53" fill="#F2495C" fill-opacity="0.8" stroke="#F2495C" stroke-width="0.65"/>
<text x="850.49" y="432.77" font-size="11.80" fill="#d9d9e2" text-anchor="middle" stroke="#d9d9e2" stroke-width="0.28" textLength="20.4" lengthAdjust="spacingAndGlyphs">309</text>
<text x="850.49" y="593.3" font-size="7.0" fill="#ccccdc" text-anchor="middle" stroke="#ccccdc" stroke-width="0.2" textLength="11.7" lengthAdjust="spacingAndGlyphs">101</text>
<rect x="876.79" y="439.82" width="47.59" height="139.38" fill="#F2495C" fill-opacity="0.8" stroke="#F2495C" stroke-width="0.65"/>
<text x="900.58" y="437.92" font-size="11.80" fill="#d9d9e2" text-anchor="middle" stroke="#d9d9e2" stroke-width="0.28" textLength="20.4" lengthAdjust="spacingAndGlyphs">298</text>
<text x="900.58" y="593.3" font-size="7.0" fill="#ccccdc" text-anchor="middle" stroke="#ccccdc" stroke-width="0.2" textLength="11.7" lengthAdjust="spacingAndGlyphs">100</text>
<rect x="926.87" y="451.53" width="47.59" height="127.67" fill="#F2495C" fill-opacity="0.8" stroke="#F2495C" stroke-width="0.65"/>
<text x="950.66" y="449.63" font-size="11.80" fill="#d9d9e2" text-anchor="middle" stroke="#d9d9e2" stroke-width="0.28" textLength="20.4" lengthAdjust="spacingAndGlyphs">273</text>
<text x="950.66" y="593.3" font-size="7.0" fill="#ccccdc" text-anchor="middle" stroke="#ccccdc" stroke-width="0.2" textLength="11.7" lengthAdjust="spacingAndGlyphs">102</text>
<rect x="976.96" y="565.82" width="47.59" height="13.38" fill="#73BF69" fill-opacity="0.8" stroke="#73BF69" stroke-width="0.65"/>
<text x="1000.75" y="563.92" font-size="11.80" fill="#d9d9e2" text-anchor="middle" stroke="#d9d9e2" stroke-width="0.28" textLength="13.9" lengthAdjust="spacingAndGlyphs">29</text>
<text x="1000.75" y="593.3" font-size="7.0" fill="#ccccdc" text-anchor="middle" stroke="#ccccdc" stroke-width="0.2" textLength="11.7" lengthAdjust="spacingAndGlyphs">103</text>
<rect x="1027.04" y="566.75" width="47.59" height="12.45" fill="#73BF69" fill-opacity="0.8" stroke="#73BF69" stroke-width="0.65"/>
<text x="1050.84" y="564.85" font-size="11.80" fill="#d9d9e2" text-anchor="middle" stroke="#d9d9e2" stroke-width="0.28" textLength="13.9" lengthAdjust="spacingAndGlyphs">27</text>
<text x="1050.84" y="593.3" font-size="7.0" fill="#ccccdc" text-anchor="middle" stroke="#ccccdc" stroke-width="0.2" textLength="11.7" lengthAdjust="spacingAndGlyphs">104</text>
<rect x="1077.13" y="570.03" width="47.59" height="9.17" fill="#73BF69" fill-opacity="0.8" stroke="#73BF69" stroke-width="0.65"/>
<text x="1100.92" y="568.13" font-size="11.80" fill="#d9d9e2" text-anchor="middle" stroke="#d9d9e2" stroke-width="0.28" textLength="13.9" lengthAdjust="spacingAndGlyphs">20</text>
<text x="1100.92" y="593.3" font-size="7.0" fill="#ccccdc" text-anchor="middle" stroke="#ccccdc" stroke-width="0.2" textLength="11.7" lengthAdjust="spacingAndGlyphs">105</text>
<rect x="1127.21" y="573.78" width="47.59" height="5.42" fill="#73BF69" fill-opacity="0.8" stroke="#73BF69" stroke-width="0.65"/>
<text x="1151.01" y="571.88" font-size="11.80" fill="#d9d9e2" text-anchor="middle" stroke="#d9d9e2" stroke-width="0.28" textLength="11.4" lengthAdjust="spacingAndGlyphs">12</text>
<text x="1151.01" y="593.3" font-size="7.0" fill="#ccccdc" text-anchor="middle" stroke="#ccccdc" stroke-width="0.2" textLength="11.7" lengthAdjust="spacingAndGlyphs">106</text>
<rect x="810.40" y="604.9" width="7.8" height="2.9" rx="1.45" fill="#7DD66F"/>
<text x="823.40" y="609" font-size="7.4" fill="#ccccdc" stroke="#ccccdc" stroke-width="0.2" textLength="20.2" lengthAdjust="spacingAndGlyphs">&lt; 60%</text>
<rect x="849.40" y="604.9" width="7.8" height="2.9" rx="1.45" fill="#F7E02A"/>
<text x="862.40" y="609" font-size="7.4" fill="#ccccdc" stroke="#ccccdc" stroke-width="0.2" textLength="17.8" lengthAdjust="spacingAndGlyphs">60%+</text>
<rect x="886.50" y="604.9" width="7.8" height="2.9" rx="1.45" fill="#F5972E"/>
<text x="899.50" y="609" font-size="7.4" fill="#ccccdc" stroke="#ccccdc" stroke-width="0.2" textLength="17.8" lengthAdjust="spacingAndGlyphs">70%+</text>
<rect x="923.10" y="604.9" width="7.8" height="2.9" rx="1.45" fill="#F2495C"/>
<text x="936.10" y="609" font-size="7.4" fill="#ccccdc" stroke="#ccccdc" stroke-width="0.2" textLength="17.8" lengthAdjust="spacingAndGlyphs">80%+</text>
</svg></body></html>
